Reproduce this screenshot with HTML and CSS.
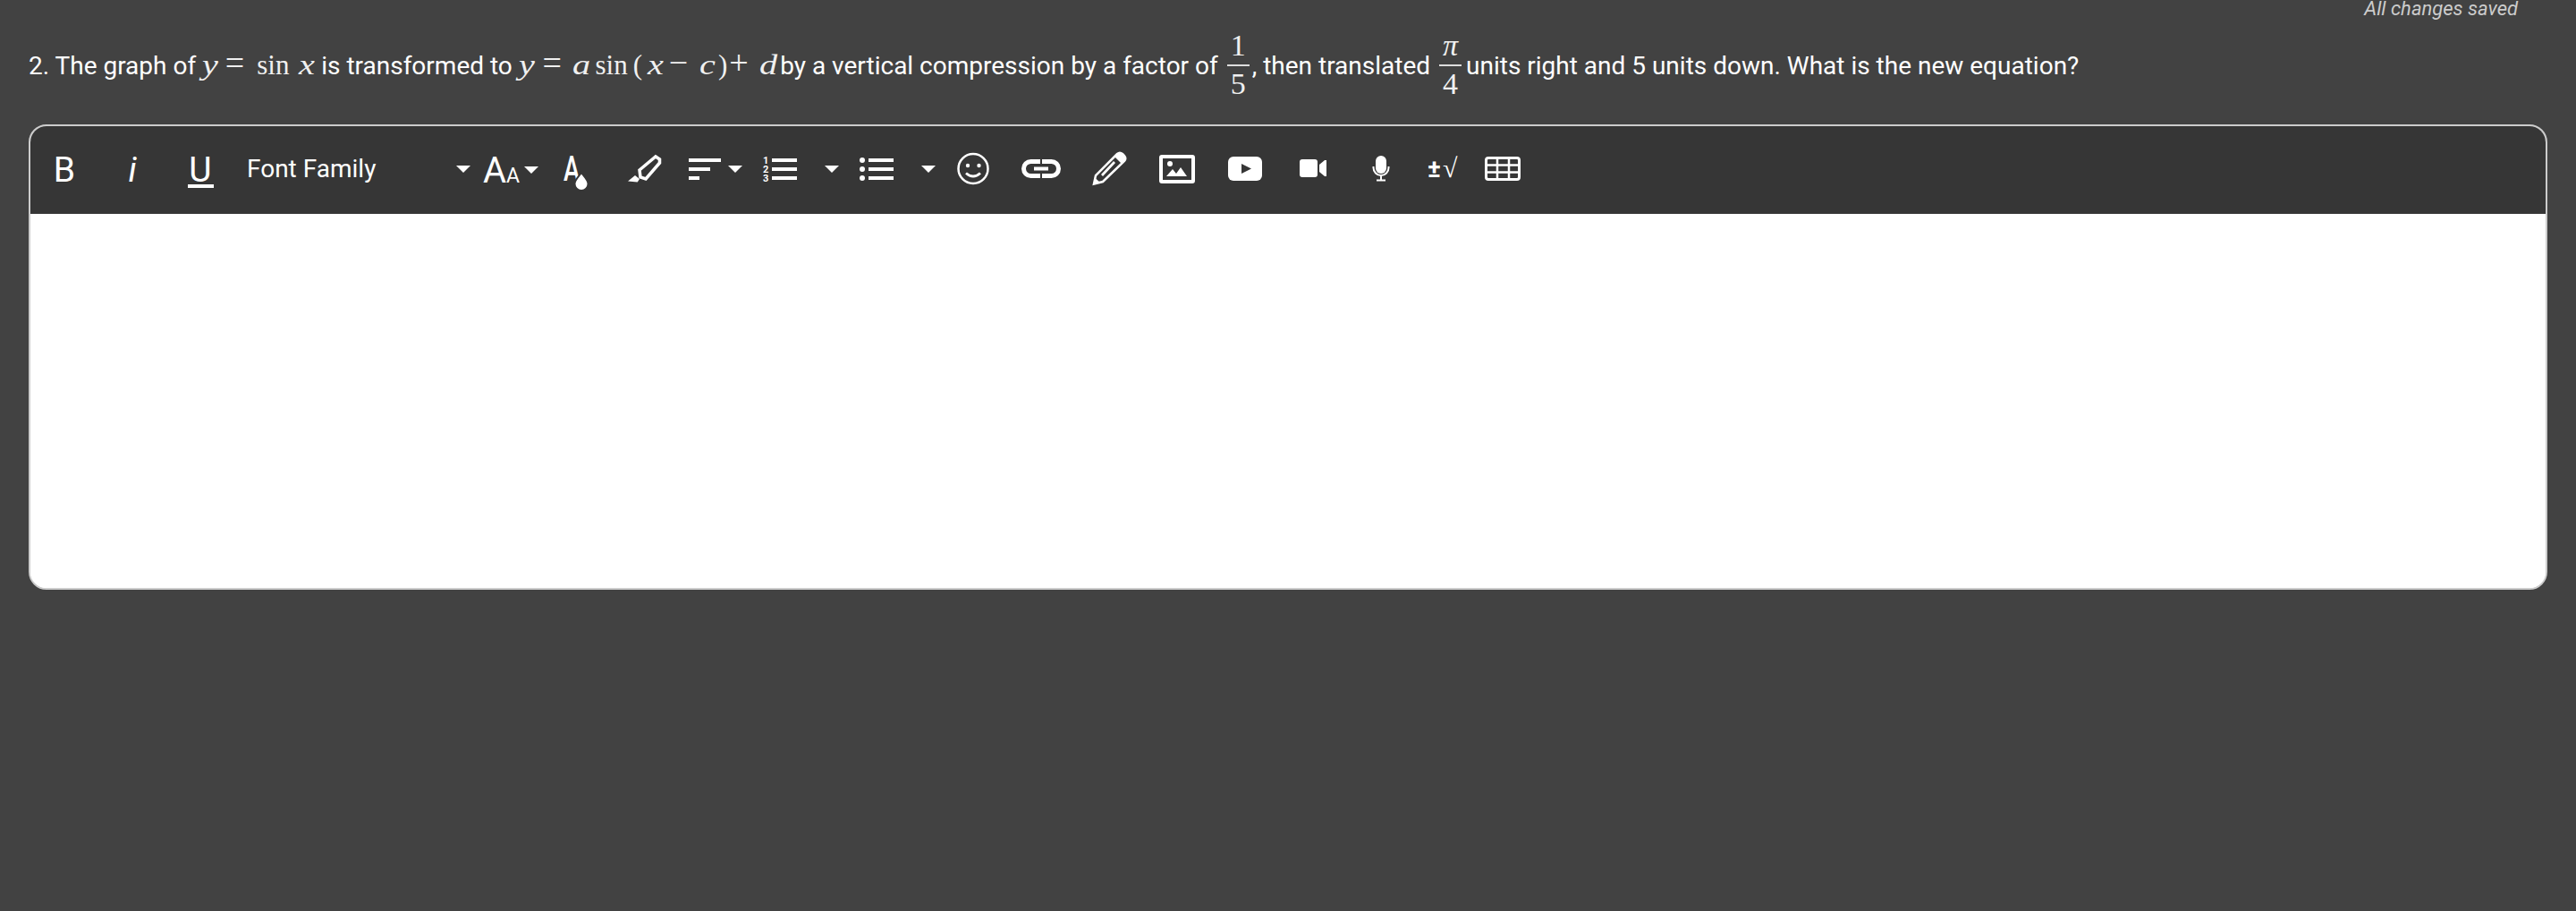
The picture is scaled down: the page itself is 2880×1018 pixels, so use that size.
FILE: index.html
```html
<!DOCTYPE html>
<html lang="en">

<head>
  <meta charset="UTF-8">
  <meta name="viewport" content="width=device-width, initial-scale=1.0">
  <title>Question</title>
  <link rel="stylesheet" href="styles.css">
</head>

<body>
  <div class="save-status">All changes saved</div>

  <div class="question">2. The graph of <span class="math m-1"><i>y</i><span class="rel">=</span>sin<span class="thin"></span><i>x</i></span> is transformed to <span class="math m-2"><i>y</i><span class="rel">=</span><i>a</i><span class="thin"></span>sin<span class="paren">(</span><i>x</i><span class="minus">−</span><i>c</i><span class="close">)</span><span class="plus">+</span><i>d</i></span> by a vertical compression by a factor of <span class="frac"><span>1</span><span class="bar"></span><span>5</span></span>, then translated <span class="frac"><span class="pi"><i>π</i></span><span class="bar"></span><span>4</span></span><span class="after-frac">units right and 5 units down. What is the new equation?</span></div>

  <div class="editor">
    <div class="toolbar">
      <div class="tool txt-b">B</div>
      <div class="tool txt-i">i</div>
      <div class="tool"><span class="txt-u">U</span></div>
      <div class="font-select">
        <span>Font Family</span>
        <svg class="caret" viewBox="0 0 16 8"><path d="M0 0h16l-8 8z" /></svg>
      </div>
      <div class="size-select">
        <span class="big-a">A</span><span class="small-a">A</span>
        <svg class="caret" viewBox="0 0 16 8"><path d="M0 0h16l-8 8z" /></svg>
      </div>

      <svg class="icon w76" viewBox="0 0 76 48">
        <text class="glyph" transform="translate(24 36) scale(.72 1)" font-size="38">A</text>
        <path class="cut" d="M44 27c-3 4-7.500 8-7.500 12.500a7.500 7.500 0 0 0 15 0C51.500 35 47 31 44 27z" />
      </svg>
      <svg class="icon w76" viewBox="0 0 76 48">
        <path class="line" d="M33 24 51 9l4.500 3v4L40 34l-6-2z" stroke-width="3.500" />
        <path d="M20 36.500 28 30l5 4-2.300 3.500z" />
      </svg>
      <svg class="icon w84" viewBox="0 0 84 48">
        <path d="M12 11h36v4H12zM12 21h24v4H12zM12 31h12v4H12zM56 19h16l-8 8z" />
      </svg>
      <svg class="icon w108" viewBox="0 0 108 48">
        <text class="digit" x="11" y="17">1</text>
        <text class="digit" x="11" y="27">2</text>
        <text class="digit" x="11" y="37">3</text>
        <path d="M21 11h28v4H21zM21 21h28v4H21zM21 31h28v4H21zM80 19h16l-8 8z" />
      </svg>
      <svg class="icon w100" viewBox="0 0 100 48">
        <circle cx="14" cy="13" r="3" />
        <circle cx="14" cy="23" r="3" />
        <circle cx="14" cy="33" r="3" />
        <path d="M21 11h28v4H21zM21 21h28v4H21zM21 31h28v4H21zM80 19h16l-8 8z" />
      </svg>
      <svg class="icon w76" viewBox="0 0 76 48">
        <circle class="line" cx="38" cy="22.500" r="16.500" stroke-width="2.500" />
        <circle cx="32" cy="19" r="2.200" />
        <circle cx="44.500" cy="19" r="2.200" />
        <path class="line" d="M30 27.500q8 7 16 0" stroke-width="2.800" />
      </svg>
      <svg class="icon w76" viewBox="0 0 76 48">
        <path class="line" d="M37 14.500H26.500a8 8 0 0 0 0 16H37M39 14.500h10.500a8 8 0 0 1 0 16H39" stroke-width="5" />
        <path d="M30 20.500h16v4H30z" />
      </svg>
      <svg class="icon w76" viewBox="0 0 76 48">
        <path class="line" d="M21 39.500 23 30 47 6q3-2.500 6 0l2 2q2.500 3 0 6L31 37z" stroke-width="2.500" />
        <path d="M47 6q3-2.500 6 0l2 2q2.500 3 0 6l-3 3-8-8zM21 39.500 22.500 33l5 4.500zM29 29l14-15 2 2-14 15z" />
      </svg>
      <svg class="icon w76" viewBox="0 0 76 48">
        <rect class="line" x="20" y="9" width="36" height="28" rx="1" stroke-width="4" />
        <circle cx="30" cy="17" r="3" />
        <path d="M26 31l7-8 4 5 5-7 7 10z" />
      </svg>
      <svg class="icon w76" viewBox="0 0 76 48">
        <rect x="19" y="9" width="38" height="27" rx="6" />
        <path class="dark" d="M34 17l11 5.500L34 28z" />
      </svg>
      <svg class="icon w76" viewBox="0 0 76 48">
        <rect x="23" y="12" width="20" height="20" rx="3" />
        <path d="M45 18l6-5h2v18h-2l-6-5z" />
      </svg>
      <svg class="icon w76" viewBox="0 0 76 48">
        <rect x="32" y="8" width="12" height="20" rx="6" />
        <path class="line" d="M29.500 20v1.500a8.500 8.500 0 0 0 17 0V20M38 30v5" stroke-width="2" />
        <path d="M33 34.500h10v2H33z" />
      </svg>
      <svg class="icon w60" viewBox="0 0 60 48">
        <text class="plus-minus" x="14" y="32">±</text>
        <text class="root" x="31" y="32">√</text>
      </svg>
      <svg class="icon w76" viewBox="0 0 76 48">
        <rect class="line" x="19.500" y="10.500" width="37" height="24" rx="2.500" stroke-width="3" />
        <path class="line" d="M32 10v25M45 10v25M19 18.500h38M19 26.500h38" stroke-width="2.500" />
      </svg>
    </div>
    <div class="editor-body"></div>
  </div>
</body>

</html>
```

FILE: styles.css
```css
* {
  box-sizing: border-box;
}

html,
body {
  margin: 0;
  height: 100%;
}

body {
  font-family: Roboto, Arial, sans-serif;
  background-color: #424242;
  color: #fff;
  overflow: hidden;
}

.save-status {
  height: 20px;
  line-height: 20px;
  padding-right: 65px;
  text-align: right;
  font-size: 22px;
  font-style: italic;
  color: #ccc;
}

.question {
  height: 119px;
  padding: 15px 0 0 32px;
  font-size: 28px;
  line-height: 70px;
  white-space: nowrap;
}

.math {
  font-family: "Liberation Serif", serif;
  font-size: 31px;
  color: #f0f0f0;
}

.math i {
  display: inline-block;
  margin-right: 4px;
  line-height: 30px;
  transform: scaleX(1.3);
  transform-origin: 0 50%;
}

.rel,
.minus,
.plus {
  font-size: 38px;
}

.m-1 .rel {
  margin: 0 14px 0 8px;
}

.m-1 .thin {
  margin-left: 11px;
}

.m-2 {
  margin-right: -3px;
}

.m-2 .rel {
  margin: 0 12px 0 9px;
}

.thin {
  margin-left: 6px;
}

.paren {
  margin: 0 6px;
}

.minus {
  margin: 0 13px 0 6px;
}

.close {
  margin-left: 3px;
}

.plus {
  margin: 0 12px 0 2px;
}

.frac {
  display: inline-flex;
  flex-direction: column;
  align-items: center;
  vertical-align: middle;
  width: 25px;
  margin: 0 3px 6px;
  font-family: "Liberation Serif", serif;
  font-size: 34px;
  line-height: 32px;
  color: #f0f0f0;
}

.frac .bar {
  width: 100%;
  height: 2px;
  margin: 5px 0 4px;
  background-color: #ddd;
}

.after-frac {
  margin-left: 2px;
}

.editor {
  width: 2816px;
  height: 520px;
  margin-left: 32px;
  border: 2px solid #ccc;
  border-radius: 20px;
  overflow: hidden;
  background-color: #fff;
}

.toolbar {
  display: flex;
  align-items: center;
  height: 98px;
  background-color: #363636;
}

.tool {
  width: 76px;
  text-align: center;
  font-size: 39px;
  line-height: 48px;
}

.txt-i {
  font-style: italic;
}

.txt-u {
  display: inline-block;
  width: 29px;
  height: 40px;
  line-height: 40px;
  border-bottom: 4px solid #fff;
}

.font-select {
  display: flex;
  align-items: center;
  justify-content: space-between;
  width: 268px;
  padding: 0 4px 3px 14px;
  font-size: 28px;
}

.size-select {
  display: flex;
  align-items: baseline;
  width: 76px;
  padding-left: 10px;
}

.big-a {
  font-size: 40px;
}

.small-a {
  font-size: 23px;
}

.caret {
  width: 16px;
  height: 8px;
  fill: #fff;
}

.size-select .caret {
  margin-left: 5px;
  align-self: center;
}

.icon {
  flex: none;
  height: 48px;
  fill: #fff;
}

.w60 {
  width: 60px;
}

.w76 {
  width: 76px;
}

.w84 {
  width: 84px;
}

.w100 {
  width: 100px;
}

.w108 {
  width: 108px;
}

.line {
  fill: none;
  stroke: #fff;
}

.dark {
  fill: #363636;
}

.cut {
  stroke: #363636;
  stroke-width: 2;
}

.glyph {
  font-family: Roboto, sans-serif;
  font-weight: 500;
}

.digit {
  font-family: Roboto, sans-serif;
  font-size: 11px;
  font-weight: 700;
}

.plus-minus {
  font-family: Roboto, sans-serif;
  font-size: 28px;
  font-weight: 700;
}

.root {
  font-family: "Liberation Serif", serif;
  font-size: 30px;
}

.editor-body {
  height: 418px;
  background-color: #fff;
}
```
